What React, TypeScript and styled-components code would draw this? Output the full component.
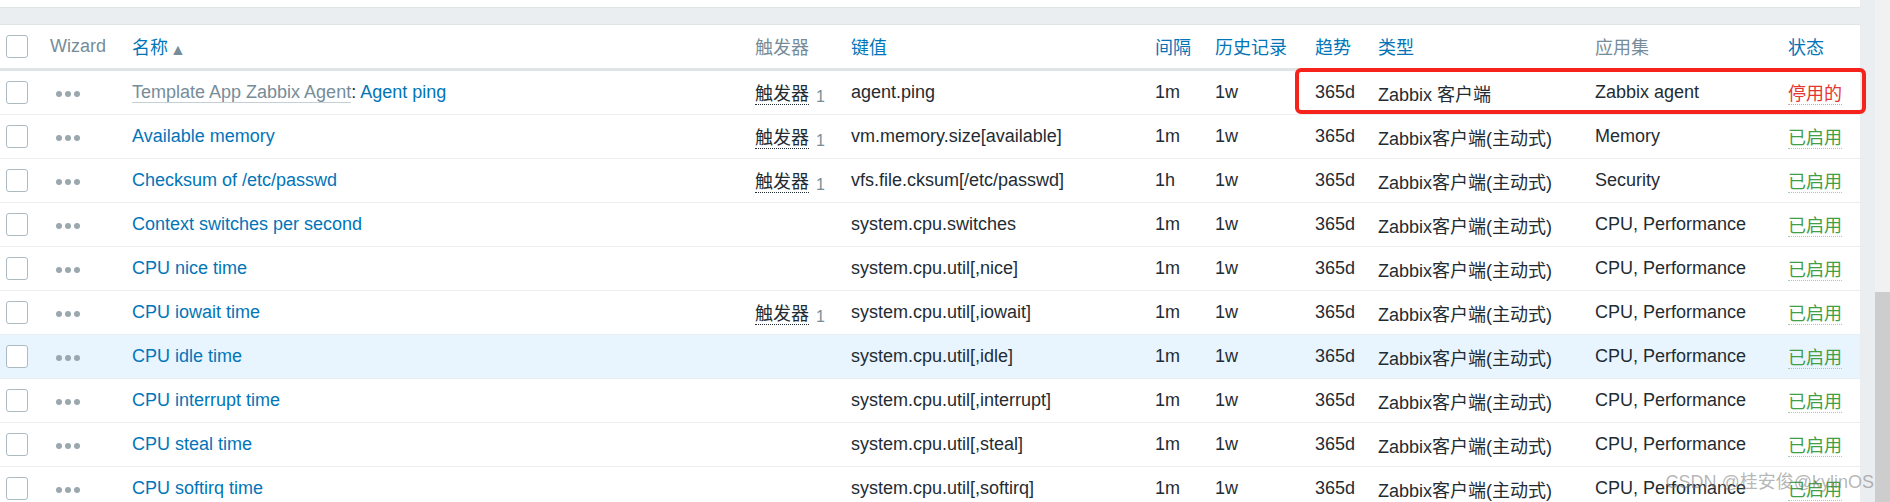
import React from 'react';
import styled, { createGlobalStyle } from 'styled-components';

const GlobalStyle = createGlobalStyle`
  html, body {
    margin: 0;
    padding: 0;
    background: #ebeef0;
    overflow: hidden;
  }
  body {
    font-family: "Liberation Sans", Arial, "Noto Sans CJK SC", sans-serif;
    font-size: 18px;
    color: #1f2c33;
  }
`;

const Page = styled.div`
  display: flex;
  width: 1890px;
  height: 502px;
  overflow: hidden;
`;

const Main = styled.div`
  display: flex;
  flex-direction: column;
  width: 1860px;
  gap: 16px;
`;

const TopStrip = styled.div`
  flex-shrink: 0;
  height: 7px;
  background: #fff;
  border-bottom: 1px solid #dfe4e7;
`;

const Panel = styled.div`
  flex-shrink: 0;
  position: relative;
  background: #fff;
  border-top: 1px solid #dfe4e7;
`;

const ScrollTrack = styled.div`
  margin-left: 15px;
  width: 15px;
  display: flex;
  flex-direction: column;
  background: #f1f1f1;
`;

const ScrollThumb = styled.div`
  margin-top: 292px;
  flex: 1;
  background: #cdcdcd;
`;

const Table = styled.table`
  width: 1860px;
  border-collapse: collapse;
  table-layout: fixed;
`;

const HeadCell = styled.th<{ $muted?: boolean }>`
  height: 43px;
  padding: 0 0 0 6px;
  text-align: left;
  font-weight: normal;
  vertical-align: middle;
  white-space: nowrap;
  color: ${p => (p.$muted ? '#768d99' : '#0275b8')};
  border-bottom: 3px solid #dfe4e7;
`;

const Cjk = styled.span`
  vertical-align: 2px;
`;

const Row = styled.tr<{ $hover?: boolean }>`
  background: ${p => (p.$hover ? '#e8f5ff' : '#fff')};
`;

const Cell = styled.td`
  height: 43px;
  padding: 0 0 0 6px;
  vertical-align: middle;
  white-space: nowrap;
  border-bottom: 1px solid #ebeef0;
`;

const Checkbox = styled.span`
  display: block;
  width: 20px;
  height: 21px;
  border: 1px solid #acbbc2;
  border-radius: 3px;
  background: #fff;
`;

const Dots = styled.span`
  display: flex;
  gap: 3px;
  margin-left: 6px;
  margin-top: 3px;
  span {
    width: 6px;
    height: 6px;
    border-radius: 50%;
    background: #9aa7af;
  }
`;

const Link = styled.span`
  color: #0275b8;
`;

const Template = styled.span`
  color: #768d99;
  border-bottom: 1px solid #c5d0d6;
`;

const SortArrow = styled.span`
  color: #768d99;
  font-size: 16px;
  margin-left: 2px;
  vertical-align: 1px;
`;

const Trigger = styled.span`
  border-bottom: 1px dotted #1f2c33;
  vertical-align: 2px;
`;

const Count = styled.span`
  color: #768d99;
  margin-left: 7px;
  font-size: 16px;
`;

const Status = styled.span<{ $on: boolean }>`
  color: ${p => (p.$on ? '#429e47' : '#e33734')};
  border-bottom: 1px dotted ${p => (p.$on ? '#9fd0a2' : '#f09a98')};
  vertical-align: 2px;
`;

const Highlight = styled.div`
  position: absolute;
  left: 1295px;
  top: 43px;
  width: 563px;
  height: 38px;
  border: 4px solid #f5231c;
  border-radius: 6px;
  pointer-events: none;
`;

const Watermark = styled.div`
  position: absolute;
  right: -14px;
  bottom: 18px;
  font-size: 18px;
  color: rgba(120, 120, 120, 0.55);
  white-space: nowrap;
`;

interface Item {
  name: string;
  template?: string;
  trigger?: boolean;
  key: string;
  interval: string;
  type: string;
  app: string;
  enabled: boolean;
  hover?: boolean;
}

const ACTIVE = 'Zabbix客户端(主动式)';

const items: Item[] = [
  { name: 'Agent ping', template: 'Template App Zabbix Agent', trigger: true, key: 'agent.ping', interval: '1m', type: 'Zabbix 客户端', app: 'Zabbix agent', enabled: false },
  { name: 'Available memory', trigger: true, key: 'vm.memory.size[available]', interval: '1m', type: ACTIVE, app: 'Memory', enabled: true },
  { name: 'Checksum of /etc/passwd', trigger: true, key: 'vfs.file.cksum[/etc/passwd]', interval: '1h', type: ACTIVE, app: 'Security', enabled: true },
  { name: 'Context switches per second', key: 'system.cpu.switches', interval: '1m', type: ACTIVE, app: 'CPU, Performance', enabled: true },
  { name: 'CPU nice time', key: 'system.cpu.util[,nice]', interval: '1m', type: ACTIVE, app: 'CPU, Performance', enabled: true },
  { name: 'CPU iowait time', trigger: true, key: 'system.cpu.util[,iowait]', interval: '1m', type: ACTIVE, app: 'CPU, Performance', enabled: true },
  { name: 'CPU idle time', key: 'system.cpu.util[,idle]', interval: '1m', type: ACTIVE, app: 'CPU, Performance', enabled: true, hover: true },
  { name: 'CPU interrupt time', key: 'system.cpu.util[,interrupt]', interval: '1m', type: ACTIVE, app: 'CPU, Performance', enabled: true },
  { name: 'CPU steal time', key: 'system.cpu.util[,steal]', interval: '1m', type: ACTIVE, app: 'CPU, Performance', enabled: true },
  { name: 'CPU softirq time', key: 'system.cpu.util[,softirq]', interval: '1m', type: ACTIVE, app: 'CPU, Performance', enabled: true },
];

const colWidths = [44, 82, 623, 96, 304, 60, 100, 63, 217, 193, 78];

const App: React.FC = () => {
  return (
    <Page>
      <GlobalStyle />
      <Main>
        <TopStrip />
        <Panel>
          <Table>
            <colgroup>
              {colWidths.map((w, i) => (
                <col key={i} style={{ width: w }} />
              ))}
            </colgroup>
            <thead>
              <tr>
                <HeadCell><Checkbox /></HeadCell>
                <HeadCell $muted>Wizard</HeadCell>
                <HeadCell><Cjk>名称</Cjk><SortArrow>▲</SortArrow></HeadCell>
                <HeadCell $muted><Cjk>触发器</Cjk></HeadCell>
                <HeadCell><Cjk>键值</Cjk></HeadCell>
                <HeadCell><Cjk>间隔</Cjk></HeadCell>
                <HeadCell><Cjk>历史记录</Cjk></HeadCell>
                <HeadCell><Cjk>趋势</Cjk></HeadCell>
                <HeadCell><Cjk>类型</Cjk></HeadCell>
                <HeadCell $muted><Cjk>应用集</Cjk></HeadCell>
                <HeadCell><Cjk>状态</Cjk></HeadCell>
              </tr>
            </thead>
            <tbody>
              {items.map(item => (
                <Row key={item.key} $hover={item.hover}>
                  <Cell><Checkbox /></Cell>
                  <Cell>
                    <Dots><span /><span /><span /></Dots>
                  </Cell>
                  <Cell>
                    {item.template && (
                      <>
                        <Template>{item.template}</Template>:{' '}
                      </>
                    )}
                    <Link>{item.name}</Link>
                  </Cell>
                  <Cell>
                    {item.trigger && (
                      <>
                        <Trigger>触发器</Trigger>
                        <Count>1</Count>
                      </>
                    )}
                  </Cell>
                  <Cell>{item.key}</Cell>
                  <Cell>{item.interval}</Cell>
                  <Cell>1w</Cell>
                  <Cell>365d</Cell>
                  <Cell>{item.type}</Cell>
                  <Cell>{item.app}</Cell>
                  <Cell>
                    <Status $on={item.enabled}>{item.enabled ? '已启用' : '停用的'}</Status>
                  </Cell>
                </Row>
              ))}
            </tbody>
          </Table>
          <Highlight />
          <Watermark>CSDN @桂安俊@kylinOS</Watermark>
        </Panel>
      </Main>
      <ScrollTrack>
        <ScrollThumb />
      </ScrollTrack>
    </Page>
  );
};

export default App;
